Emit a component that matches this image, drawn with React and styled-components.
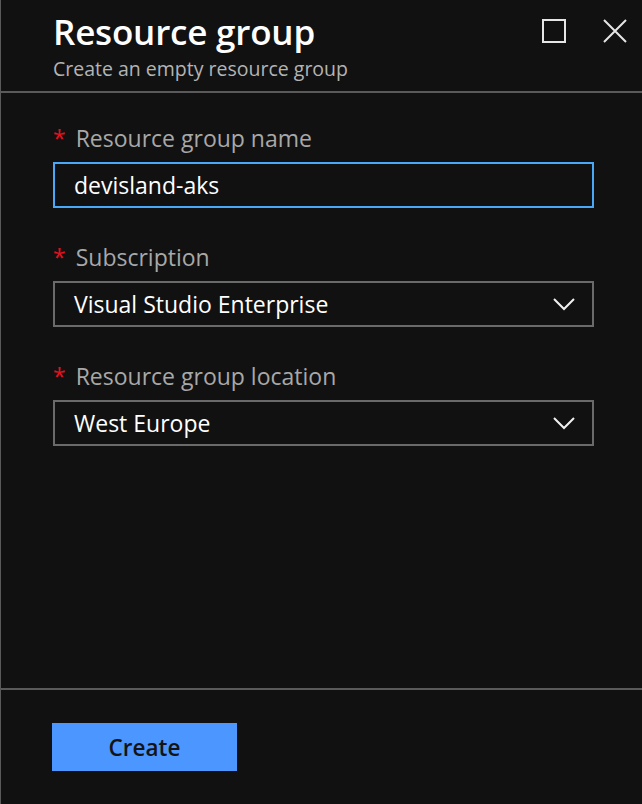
import React from 'react';
import styled, { createGlobalStyle } from 'styled-components';

const GlobalStyle = createGlobalStyle`
  html, body {
    margin: 0;
    padding: 0;
    background: #111111;
  }
  body {
    font-family: "Open Sans", "Noto Sans", "Liberation Sans", sans-serif;
  }
`;

const Root = styled.div`
  box-sizing: border-box;
  width: 642px;
  height: 804px;
  background: #111111;
  border-left: 1px solid #5a5a5a;
  display: flex;
  flex-direction: column;
  color: #ffffff;
`;

const Header = styled.header`
  box-sizing: border-box;
  height: 93px;
  padding: 11px 15px 0 52px;
  border-bottom: 2px solid #5a5a5a;
  display: flex;
  justify-content: space-between;
  align-items: flex-start;
`;

const TitleBlock = styled.div`
  display: flex;
  flex-direction: column;
`;

const Title = styled.h1`
  margin: 0;
  font-size: 35px;
  line-height: 42px;
  font-weight: 600;
  letter-spacing: -0.2px;
`;

const Subtitle = styled.div`
  margin-top: 4px;
  font-size: 19.5px;
  line-height: 24px;
  color: #b4b4b4;
`;

const Actions = styled.div`
  display: flex;
  gap: 37px;
  padding-top: 8px;
`;

const IconButton = styled.button`
  background: none;
  border: none;
  padding: 0;
  width: 24px;
  height: 24px;
  color: #e6e6e6;
  cursor: pointer;
  display: flex;
`;

const Body = styled.main`
  flex: 1;
  padding: 30px 48px 0 52px;
  display: flex;
  flex-direction: column;
  gap: 34px;
`;

const Field = styled.div`
  display: flex;
  flex-direction: column;
  gap: 9px;
`;

const Label = styled.label`
  font-size: 23px;
  line-height: 30px;
  color: #a8a8a8;
  display: flex;
  gap: 10px;
`;

const Star = styled.span`
  color: #e8101f;
`;

const Box = styled.div`
  box-sizing: border-box;
  height: 46px;
  border: 2px solid ${p => (p.focused ? '#4aa8f8' : '#6a6a6a')};
  padding: 0 17px 0 19px;
  display: flex;
  align-items: center;
  justify-content: space-between;
  font-size: 23px;
  color: #ffffff;
`;

const Footer = styled.footer`
  height: 116px;
  box-sizing: border-box;
  border-top: 2px solid #5a5a5a;
  padding: 33px 0 0 51px;
`;

const CreateButton = styled.button`
  width: 185px;
  height: 48px;
  background: #4b97ff;
  border: none;
  color: #141414;
  font-family: inherit;
  font-size: 22.5px;
  font-weight: 600;
  cursor: pointer;
`;

const Chevron = () => (
  <svg width="22" height="13" viewBox="0 0 22 13">
    <path d="M1 1 L11 11 L21 1" fill="none" stroke="#f0f0f0" strokeWidth="2" />
  </svg>
);

const fields = [
  { label: 'Resource group name', value: 'devisland-aks', focused: true },
  { label: 'Subscription', value: 'Visual Studio Enterprise', select: true },
  { label: 'Resource group location', value: 'West Europe', select: true },
];

const App = () => (
  <>
    <GlobalStyle />
    <Root>
      <Header>
        <TitleBlock>
          <Title>Resource group</Title>
          <Subtitle>Create an empty resource group</Subtitle>
        </TitleBlock>
        <Actions>
          <IconButton aria-label="Maximize">
            <svg width="24" height="24" viewBox="0 0 24 24">
              <rect x="1" y="1" width="22" height="22" fill="none" stroke="currentColor" strokeWidth="2" />
            </svg>
          </IconButton>
          <IconButton aria-label="Close">
            <svg width="24" height="24" viewBox="0 0 24 24">
              <path d="M1 1 L23 23 M23 1 L1 23" fill="none" stroke="currentColor" strokeWidth="2" />
            </svg>
          </IconButton>
        </Actions>
      </Header>
      <Body>
        {fields.map(f => (
          <Field key={f.label}>
            <Label>
              <Star>*</Star>
              {f.label}
            </Label>
            <Box focused={f.focused}>
              <span>{f.value}</span>
              {f.select && <Chevron />}
            </Box>
          </Field>
        ))}
      </Body>
      <Footer>
        <CreateButton>Create</CreateButton>
      </Footer>
    </Root>
  </>
);

export default App;
